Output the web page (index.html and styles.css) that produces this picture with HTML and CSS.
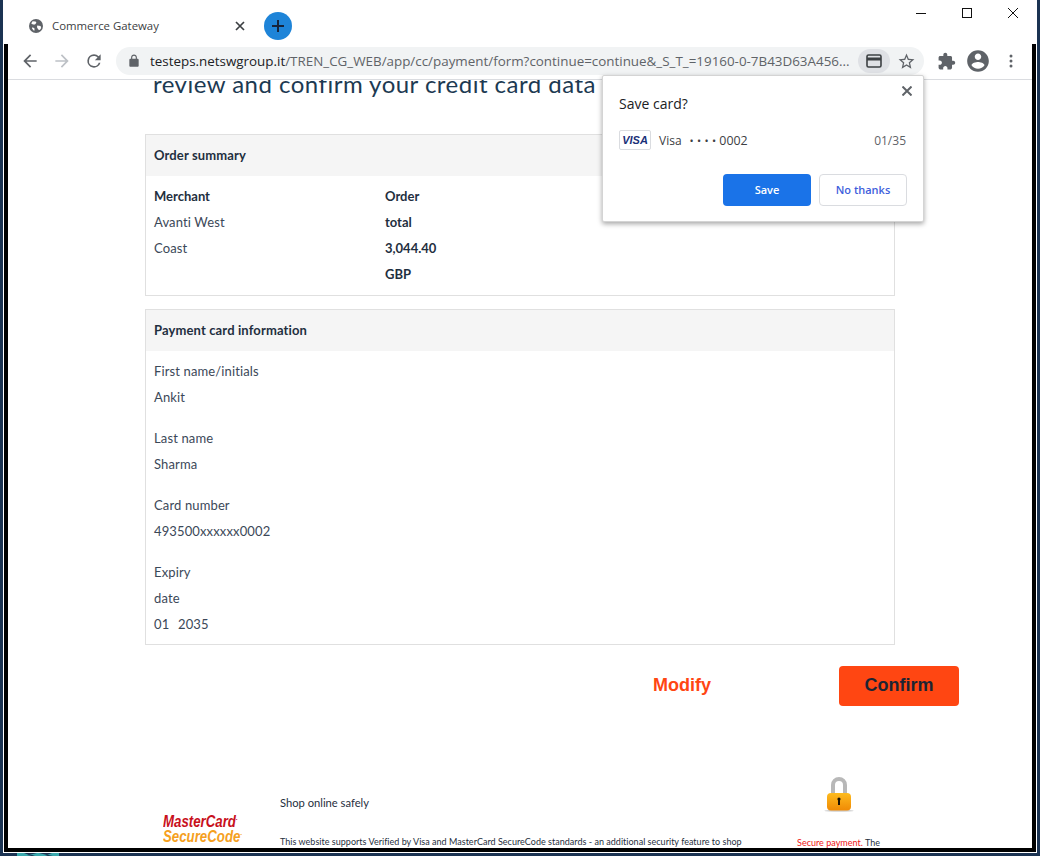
FILE: index.html
```html
<!DOCTYPE html>
<html lang="en">
<head>
<meta charset="utf-8">
<title>Commerce Gateway</title>
<link rel="stylesheet" href="styles.css">
</head>
<body>
<div class="desktop">
  <svg class="wallpaper-mark" width="42" height="3" viewBox="0 0 42 3"><path d="M0 0h7l5 2 8-2h2l8 2 5-2h7v3h-6l-5-1-3 1H18l-3-1-5 1H0z" fill="#3aa9ad"/></svg>
  <div class="window">
    <div class="titlebar">
      <div class="tab">
        <svg class="tab-icon" width="14" height="14" viewBox="0 0 14 14"><circle cx="7" cy="7" r="7" fill="#5f6368"/><path fill="#fff" d="M3.600 2.200l3 .2.800 1.400-1.400 1.600-2 .2-1.800-1.200zM8.200 6.600l3.400.4.600 2-1.400 2-1.600-.6-1.200-2.200zM3.400 8.200l2 1 .2 2.400-1-.2-1.600-2z"/></svg>
        <span class="tab-title">Commerce Gateway</span>
        <svg class="tab-close" width="10" height="10" viewBox="0 0 10 10"><path d="M1 1l8 8M9 1l-8 8" stroke="#3c4043" stroke-width="1.700" fill="none"/></svg>
      </div>
      <div class="new-tab"><svg width="14" height="14" viewBox="0 0 14 14"><path d="M7 1v12M1 7h12" stroke="#16233a" stroke-width="2" fill="none"/></svg></div>
      <div class="win-controls">
        <div class="win-btn"><svg width="10" height="10" viewBox="0 0 10 10"><path d="M0 5.500h10" stroke="#111" fill="none"/></svg></div>
        <div class="win-btn"><svg width="10" height="10" viewBox="0 0 10 10"><rect x=".5" y=".5" width="9" height="9" stroke="#111" fill="none"/></svg></div>
        <div class="win-btn"><svg width="10" height="10" viewBox="0 0 10 10"><path d="M0 0l10 10M10 0L0 10" stroke="#111" fill="none"/></svg></div>
      </div>
    </div>
    <div class="frame">
      <div class="toolbar">
        <div class="tool"><svg width="20" height="20" viewBox="0 0 24 24"><path fill="#5f6368" d="M20 11H7.830l5.590-5.590L12 4l-8 8 8 8 1.410-1.410L7.830 13H20z"/></svg></div>
        <div class="tool"><svg width="20" height="20" viewBox="0 0 24 24"><path fill="#bdc1c6" d="M12 4l-1.410 1.410L16.170 11H4v2h12.170l-5.580 5.590L12 20l8-8z"/></svg></div>
        <div class="tool"><svg width="20" height="20" viewBox="0 0 24 24"><path fill="#5f6368" d="M17.650 6.350A7.960 7.960 0 0 0 12 4a8 8 0 1 0 7.730 10h-2.080A6 6 0 1 1 12 6c1.660 0 3.140.690 4.220 1.780L13 11h7V4z"/></svg></div>
        <div class="omnibox">
          <svg class="lock-small" width="14" height="14" viewBox="0 0 24 24"><path fill="#5f6368" d="M18 8h-1V6c0-2.760-2.240-5-5-5S7 3.240 7 6v2H6c-1.100 0-2 .9-2 2v10c0 1.100.9 2 2 2h12c1.100 0 2-.9 2-2V10c0-1.100-.9-2-2-2zM9 8V6c0-1.660 1.340-3 3-3s3 1.340 3 3v2z"/></svg>
          <span class="url"><span class="url-host">testeps.netswgroup.it</span>/TREN_CG_WEB/app/cc/payment/form?continue=continue&amp;_S_T_=19160-0-7B43D63A456...</span>
          <div class="card-chip"><svg width="16" height="14" viewBox="0 0 16 14"><rect x="1" y="1" width="14" height="12" rx="1.500" fill="none" stroke="#3c4043" stroke-width="1.600"/><rect x="1" y="3.500" width="14" height="3" fill="#3c4043"/></svg></div>
          <svg class="star" width="19" height="19" viewBox="0 0 24 24"><path fill="#5f6368" d="M22 9.240l-7.190-.620L12 2 9.190 8.630 2 9.240l5.460 4.730L5.820 21 12 17.270 18.180 21l-1.630-7.030L22 9.240zM12 15.400l-3.760 2.270 1-4.280-3.320-2.880 4.380-.380L12 6.100l1.710 4.040 4.380.380-3.320 2.880 1 4.280L12 15.400z"/></svg>
        </div>
        <div class="tool tool-ext"><svg width="19" height="19" viewBox="0 0 24 24"><path fill="#5f6368" d="M20.500 11H19V7c0-1.100-.9-2-2-2h-4V3.500C13 2.120 11.880 1 10.500 1S8 2.120 8 3.500V5H4c-1.100 0-1.990.9-1.990 2v3.800H3.500c1.490 0 2.700 1.210 2.700 2.700s-1.210 2.700-2.700 2.700H2V20c0 1.100.9 2 2 2h3.800v-1.500c0-1.490 1.210-2.700 2.700-2.700 1.490 0 2.700 1.210 2.700 2.700V22H17c1.100 0 2-.9 2-2v-4h1.500c1.380 0 2.500-1.120 2.500-2.500S21.880 11 20.500 11z"/></svg></div>
        <div class="tool"><svg width="26" height="26" viewBox="0 0 24 24"><path fill="#5f6368" d="M12 2C6.480 2 2 6.480 2 12s4.480 10 10 10 10-4.480 10-10S17.520 2 12 2zm0 3c1.660 0 3 1.340 3 3s-1.340 3-3 3-3-1.340-3-3 1.340-3 3-3zm0 14.200c-2.500 0-4.710-1.280-6-3.220.03-1.990 4-3.080 6-3.080 1.990 0 5.970 1.090 6 3.080-1.290 1.940-3.500 3.220-6 3.220z"/></svg></div>
        <div class="tool tool-menu"><svg width="4" height="14" viewBox="0 0 4 14"><circle cx="2" cy="2" r="1.500" fill="#5f6368"/><circle cx="2" cy="7" r="1.500" fill="#5f6368"/><circle cx="2" cy="12" r="1.500" fill="#5f6368"/></svg></div>
      </div>

      <main class="page">
        <h1 class="heading">review and confirm your credit card data</h1>

        <section class="card">
          <h2 class="card-head">Order summary</h2>
          <div class="summary">
            <div class="summary-col">
              <div class="label-strong">Merchant</div>
              <div class="row merchant-name">Avanti West Coast</div>
            </div>
            <div class="summary-col order-col">
              <div class="label-strong">Order total</div>
              <div class="label-strong">3,044.40 GBP</div>
            </div>
          </div>
        </section>

        <section class="card">
          <h2 class="card-head">Payment card information</h2>
          <div class="fields">
            <div class="field"><div class="row">First name/initials</div><div class="row">Ankit</div></div>
            <div class="field"><div class="row">Last name</div><div class="row">Sharma</div></div>
            <div class="field"><div class="row">Card number</div><div class="row">493500xxxxxx0002</div></div>
            <div class="field"><div class="row expiry-label">Expiry date</div><div class="row">01&nbsp;&nbsp;&#8201;2035</div></div>
          </div>
        </section>

        <div class="actions">
          <a class="modify">Modify</a>
          <button class="confirm">Confirm</button>
        </div>

        <footer class="footer">
          <div class="mc-logo"><span class="mc-top">MasterCard<sup>.</sup></span><span class="mc-bottom">SecureCode<sup>.</sup></span></div>
          <div class="foot-text">
            <div class="foot-title">Shop online safely</div>
            <div class="foot-note">This website supports Verified by Visa and MasterCard SecureCode standards - an additional security feature to shop</div>
          </div>
          <div class="foot-secure">
            <svg class="padlock" width="30" height="36" viewBox="0 0 30 36">
              <defs>
                <linearGradient id="gold" x1="0" y1="0" x2="0" y2="1"><stop offset="0" stop-color="#fdbb1e"/><stop offset="1" stop-color="#f08a05"/></linearGradient>
              </defs>
              <ellipse cx="15" cy="34.800" rx="14.500" ry="1" fill="#d0d0d0"/>
              <path d="M9 18V9a6 6 0 0 1 12 0v9" fill="none" stroke="#b8b8b8" stroke-width="4"/>
              <rect x="3" y="17" width="24" height="17.500" rx="4" fill="url(#gold)"/>
              <circle cx="15" cy="23" r="1.600" fill="#1a1204"/>
              <rect x="14" y="23" width="2" height="6" fill="#1a1204"/>
            </svg>
            <div class="foot-note"><span class="secure-red">Secure payment.</span> The</div>
          </div>
        </footer>
      </main>

      <aside class="bubble">
        <svg class="bubble-close" width="10" height="10" viewBox="0 0 10 10"><path d="M.5.500l9 9M9.500.500l-9 9" stroke="#5f6368" stroke-width="2" fill="none"/></svg>
        <div class="bubble-title">Save card?</div>
        <div class="bubble-card">
          <span class="visa-badge">VISA</span>
          <span class="bubble-brand">Visa</span>
          <span class="bubble-dots">••••</span>
          <span class="bubble-num">0002</span>
          <span class="bubble-exp">01/35</span>
        </div>
        <div class="bubble-actions">
          <button class="btn-save">Save</button>
          <button class="btn-no">No thanks</button>
        </div>
      </aside>
    </div>
  </div>
</div>
</body>
</html>
```

FILE: styles.css
```css
* { box-sizing: border-box; }
html, body { margin: 0; padding: 0; }
body { width: 1040px; height: 856px; overflow: hidden; background: #1b3352; }

.desktop {
  position: relative;
  width: 1040px;
  height: 856px;
  padding: 0 3px 3px;
  background: #1b3352;
  overflow: hidden;
}
.wallpaper-mark { position: absolute; left: 17px; bottom: 0; }

.window {
  position: relative;
  display: flex;
  flex-direction: column;
  height: 853px;
  padding: 0 1px 1px;
  background: #fff;
  font-family: "Open Sans", sans-serif;
}

/* title bar */
.titlebar { display: flex; align-items: center; height: 44px; margin: 0 -1px; padding-top: 8px; flex: none; }
.tab { display: flex; align-items: center; width: 248px; padding-left: 26px; }
.tab-icon { flex: none; }
.tab-title { margin-left: 9px; padding-bottom: 2px; font-size: 11.400px; color: #3c4043; width: 178px; white-space: nowrap; }
.tab-close { flex: none; margin-left: 5px; }
.new-tab { display: flex; align-items: center; justify-content: center; width: 28px; height: 28px; margin-left: 13px; border-radius: 50%; background: #1e84d8; }
.win-controls { display: flex; align-self: flex-start; margin-left: auto; margin-top: -8px; margin-right: 1px; }
.win-btn { display: flex; align-items: center; justify-content: center; width: 46px; height: 26px; }

/* frame */
.frame {
  position: relative;
  flex: 1;
  min-height: 0;
  display: flex;
  flex-direction: column;
  border: 4px solid #000;
  border-top: 0;
  background: #fff;
  overflow: hidden;
}

/* toolbar */
.toolbar { display: flex; align-items: center; flex: none; height: 36px; padding: 0 5px 1px 6px; border-bottom: 1px solid #dadce0; background: #fff; }
.tool { display: flex; align-items: center; justify-content: center; width: 32px; height: 32px; flex: none; }
.tool-ext { margin-left: 6px; }
.tool-menu { margin-left: 1px; }
.omnibox { display: flex; align-items: center; width: 808px; height: 28px; margin-left: 6px; padding: 0 8px 0 11px; border-radius: 14px; background: #f1f3f4; }
.lock-small { flex: none; }
.url { flex: 1; margin-left: 9px; font-size: 13.400px; color: #5f6368; white-space: nowrap; overflow: hidden; }
.url-host { color: #202124; }
.card-chip { display: flex; align-items: center; justify-content: center; width: 32px; height: 24px; flex: none; border-radius: 12px; background: #dfe1e5; }
.star { flex: none; margin-left: 7px; }

/* page */
.page { flex: 1; min-height: 0; overflow: hidden; padding-left: 137px; font-family: Lato, sans-serif; font-size: 13px; color: #3b4858; }
.heading { margin: -11px 0 35px 8px; font-family: Lato, sans-serif; font-size: 24px; font-weight: 400; line-height: 30px; letter-spacing: .48px; color: #1d3a52; white-space: nowrap; }

.card { width: 750px; margin-bottom: 13px; border: 1px solid #e0e0e0; }
.card-head { margin: 0; height: 41px; padding: 0 8px; background: #f5f5f5; font-size: 13px; font-weight: 700; line-height: 41px; letter-spacing: .13px; color: #1f2f40; }
.row, .label-strong { line-height: 26px; }
.row { letter-spacing: .13px; }
.label-strong { font-weight: 700; color: #1f2f40; }

.summary { display: flex; padding: 7px 8px 8px; }
.summary-col { width: 231px; }
.merchant-name { width: 95px; }
.order-col { width: 60px; }

.fields { padding: 7px 8px; }
.field + .field { margin-top: 15px; }
.expiry-label { width: 50px; }

.actions { display: flex; align-items: center; justify-content: flex-end; width: 814px; margin-top: 21px; }
.modify { margin-top: -2px; font-family: "Liberation Sans", sans-serif; font-size: 18px; font-weight: 700; color: #ff4612; }
.confirm { width: 120px; height: 40px; margin-left: 128px; padding: 0 0 2px; border: 0; border-radius: 4px; background: #ff4612; font-family: "Liberation Sans", sans-serif; font-size: 18px; font-weight: 700; color: #1c2433; }

/* footer */
.footer { display: flex; align-items: flex-start; margin-top: 71px; }
.mc-logo { display: flex; flex-direction: column; align-items: flex-start; width: 135px; margin-top: 37px; padding-left: 18px; font-family: "Liberation Sans", sans-serif; font-size: 17px; font-weight: 700; font-style: italic; line-height: 15px; white-space: nowrap; }
.mc-top, .mc-bottom { transform: scaleX(.78); transform-origin: left center; }
.mc-top { color: #c8101c; }
.mc-bottom { color: #f5a01e; }
.mc-logo sup { font-size: 8px; line-height: 0; }
.foot-text { width: 517px; padding-top: 19px; }
.foot-title { font-size: 11.200px; line-height: 14px; color: #1f2f40; }
.foot-note { margin-top: 26px; font-size: 9px; line-height: 12px; letter-spacing: .02px; color: #1f2f40; white-space: nowrap; }
.foot-secure { display: flex; flex-direction: column; }
.foot-secure .foot-note { margin-top: 25px; }
.padlock { margin-left: 27px; margin-top: -1px; }
.secure-red { color: #f01414; }

/* save card bubble */
.bubble { position: absolute; left: 594px; top: 31px; width: 322px; height: 147px; padding: 17px 16px; border: 1px solid #d4d4d4; border-radius: 2px; background: #fff; box-shadow: 0 2px 5px rgba(0,0,0,.35); font-family: "Open Sans", sans-serif; color: #202124; }
.bubble-close { position: absolute; right: 11px; top: 10px; }
.bubble-title { font-size: 14px; line-height: 22px; }
.bubble-card { display: flex; align-items: center; height: 20px; margin-top: 15px; font-size: 12px; }
.visa-badge { display: flex; align-items: center; justify-content: center; width: 32px; height: 20px; border: 1px solid #dadce0; border-radius: 2px; font-family: "Liberation Sans", sans-serif; font-size: 11px; font-weight: 700; font-style: italic; color: #1a2f78; }
.bubble-brand { margin-left: 8px; color: #3c4043; }
.bubble-dots { margin-left: 8px; font-size: 11px; letter-spacing: 3.300px; color: #3c4043; }
.bubble-num { font-size: 12.400px; color: #3c4043; }
.bubble-exp { margin-left: auto; margin-right: 1px; color: #5f6368; }
.bubble-actions { display: flex; justify-content: flex-end; gap: 8px; margin-top: 24px; }
.btn-save, .btn-no { width: 88px; height: 32px; padding: 0 0 2px; border-radius: 4px; font-family: "Open Sans", sans-serif; font-size: 11px; font-weight: 600; }
.btn-save { border: 0; background: #1a73e8; color: #fff; }
.btn-no { border: 1px solid #dadce0; background: #fff; color: #3f5fdc; }
```
